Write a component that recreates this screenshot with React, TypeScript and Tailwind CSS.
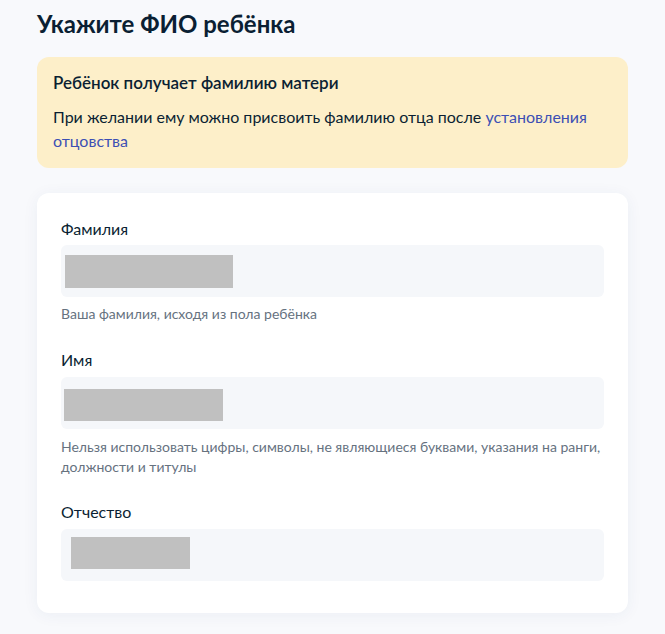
export default function App() {
  return (
    <div className="min-h-[634px] bg-[#f8f9fc] px-[37px] pt-[8px] pb-[22px] font-['Lato','Noto_Sans',sans-serif] text-[#0b1f33]">
      <h1 className="text-[24px] font-bold leading-[32px]">Укажите ФИО ребёнка</h1>

      <div className="mt-[17px] rounded-[12px] bg-[#fdefc9] px-[16px] pt-[16px] pb-[15px]">
        <div className="text-[17px] font-semibold leading-[20px]">Ребёнок получает фамилию матери</div>
        <p className="mt-[12px] text-[16px] leading-[24px]">
          При желании ему можно присвоить фамилию отца после{" "}
          <a className="text-[#3c4fb4]">установления отцовства</a>
        </p>
      </div>

      <div className="mt-[25px] rounded-[12px] bg-white px-[24px] pt-[24px] pb-[32px] shadow-[0_2px_16px_rgba(40,60,120,0.06)]">
        <div className="text-[16px] leading-[24px]">Фамилия</div>
        <div className="mt-[4px] flex h-[52px] items-start rounded-[6px] bg-[#f5f7fa]">
          <div className="ml-[4px] mt-[10px] h-[33px] w-[168px] bg-[#c0c0c0]" />
        </div>
        <div className="mt-[7px] text-[14px] leading-[20px] text-[#66727f]">Ваша фамилия, исходя из пола ребёнка</div>

        <div className="mt-[24px] text-[16px] leading-[24px]">Имя</div>
        <div className="mt-[5px] flex h-[52px] items-start rounded-[6px] bg-[#f5f7fa]">
          <div className="ml-[3px] mt-[12px] h-[32px] w-[159px] bg-[#c0c0c0]" />
        </div>
        <div className="mt-[8px] text-[14px] leading-[20px] text-[#66727f]">
          Нельзя использовать цифры, символы, не являющиеся буквами, указания на ранги, должности и титулы
        </div>

        <div className="mt-[23px] text-[16px] leading-[24px]">Отчество</div>
        <div className="mt-[5px] flex h-[52px] items-start rounded-[6px] bg-[#f5f7fa]">
          <div className="ml-[10px] mt-[8px] h-[32px] w-[119px] bg-[#c0c0c0]" />
        </div>
      </div>
    </div>
  );
}
